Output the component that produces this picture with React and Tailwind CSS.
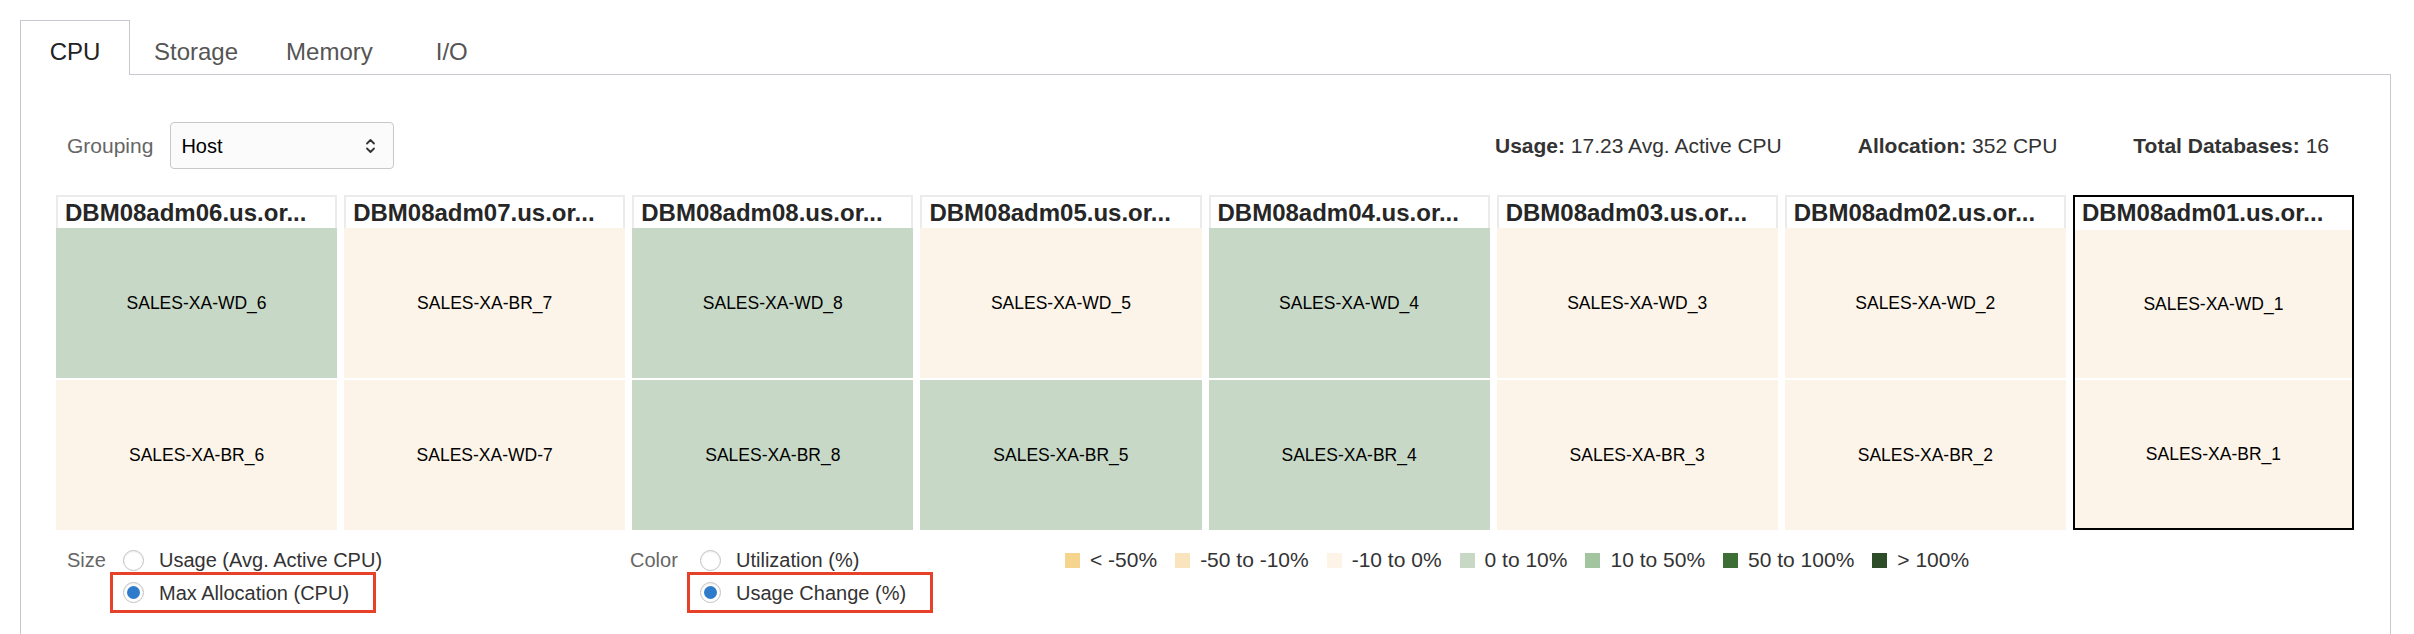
import React from 'react';

const TABS = ['CPU', 'Storage', 'Memory', 'I/O'];

const GREEN = 'bg-[#c7d9c6]';
const CREAM = 'bg-[#fcf4e8]';

const HOSTS = [
  { name: 'DBM08adm06.us.or...', cells: [{ db: 'SALES-XA-WD_6', c: GREEN }, { db: 'SALES-XA-BR_6', c: CREAM }] },
  { name: 'DBM08adm07.us.or...', cells: [{ db: 'SALES-XA-BR_7', c: CREAM }, { db: 'SALES-XA-WD-7', c: CREAM }] },
  { name: 'DBM08adm08.us.or...', cells: [{ db: 'SALES-XA-WD_8', c: GREEN }, { db: 'SALES-XA-BR_8', c: GREEN }] },
  { name: 'DBM08adm05.us.or...', cells: [{ db: 'SALES-XA-WD_5', c: CREAM }, { db: 'SALES-XA-BR_5', c: GREEN }] },
  { name: 'DBM08adm04.us.or...', cells: [{ db: 'SALES-XA-WD_4', c: GREEN }, { db: 'SALES-XA-BR_4', c: GREEN }] },
  { name: 'DBM08adm03.us.or...', cells: [{ db: 'SALES-XA-WD_3', c: CREAM }, { db: 'SALES-XA-BR_3', c: CREAM }] },
  { name: 'DBM08adm02.us.or...', cells: [{ db: 'SALES-XA-WD_2', c: CREAM }, { db: 'SALES-XA-BR_2', c: CREAM }] },
  { name: 'DBM08adm01.us.or...', selected: true, cells: [{ db: 'SALES-XA-WD_1', c: CREAM }, { db: 'SALES-XA-BR_1', c: CREAM }] },
];

const LEGEND = [
  { label: '< -50%', c: 'bg-[#f5d58d]' },
  { label: '-50 to -10%', c: 'bg-[#f9e4bd]' },
  { label: '-10 to 0%', c: 'bg-[#fdf4e7]' },
  { label: '0 to 10%', c: 'bg-[#c7d8c5]' },
  { label: '10 to 50%', c: 'bg-[#a2c49f]' },
  { label: '50 to 100%', c: 'bg-[#3d6e35]' },
  { label: '> 100%', c: 'bg-[#2d4d28]' },
];

const Radio = ({ checked }) => (
  <span className="w-[21px] h-[21px] shrink-0 rounded-full border border-[#c2c2c2] bg-white flex items-center justify-center shadow-[inset_0_1px_2px_rgba(0,0,0,0.08)]">
    {checked && <span className="w-[13px] h-[13px] rounded-full bg-[#2f7bcb]" />}
  </span>
);

const RadioGroup = ({ title, titleWidth, options }) => (
  <div className="flex">
    <div className={`${titleWidth} h-[24px] leading-[24px] text-[20px] text-[#666]`}>{title}</div>
    <div className="flex flex-col items-start">
      <div className="h-[24px] flex items-center pl-[13px]">
        <Radio />
        <span className="ml-[15px] text-[20px] text-[#333] whitespace-nowrap">{options[0]}</span>
      </div>
      <div className="h-[41px] flex items-center border-[3px] border-[#e8412a] pl-[10px] pr-[24px]">
        <Radio checked />
        <span className="ml-[15px] text-[20px] text-[#333] whitespace-nowrap">{options[1]}</span>
      </div>
    </div>
  </div>
);

export default function App() {
  return (
    <div className="w-[2414px] h-[634px] overflow-hidden bg-white font-['Liberation_Sans',Arial,sans-serif] text-[#333] pt-[20px] pl-[20px] pr-[23px] flex flex-col">
      {/* tabs */}
      <div className="flex h-[55px] shrink-0">
        {TABS.map((t, i) => (
          <div
            key={t}
            className={
              i === 0
                ? 'min-w-[110px] px-[24px] border border-b-0 border-[#c6cad0] bg-white pt-[17px] text-center text-[24px] leading-[28px] text-[#222]'
                : 'min-w-[110px] px-[24px] border-b border-[#c6cad0] pt-[18px] text-center text-[24px] leading-[28px] text-[#555]'
            }
          >
            {t}
          </div>
        ))}
        <div className="flex-1 border-b border-[#c6cad0]" />
      </div>

      {/* panel */}
      <div className="flex-1 border-l border-r border-[#c6cad0] pt-[47px] pl-[35px] pr-[36px]">
        <div className="flex items-center justify-between h-[47px] pl-[11px] pr-[25px]">
          <div className="flex items-center gap-[17px]">
            <span className="text-[21px] text-[#666]">Grouping</span>
            <div className="w-[224px] h-[47px] border border-[#c8c8c8] rounded-[4px] bg-[#fbfbfb] flex items-center justify-between pl-[10px] pr-[17px]">
              <span className="text-[20px] text-black">Host</span>
              <svg width="11" height="20" viewBox="0 0 11 20" fill="none" stroke="#333" strokeWidth="1.8" strokeLinecap="round" strokeLinejoin="round">
                <path d="M2 7.5 L5.5 4 L9 7.5" />
                <path d="M2 12.5 L5.5 16 L9 12.5" />
              </svg>
            </div>
          </div>
          <div className="flex items-center gap-[76px] text-[21px] text-[#333]">
            <span><b>Usage:</b> 17.23 Avg. Active CPU</span>
            <span><b>Allocation:</b> 352 CPU</span>
            <span><b>Total Databases:</b> 16</span>
          </div>
        </div>

        {/* treemap */}
        <div className="mt-[26px] grid grid-cols-8 gap-[7px] h-[335px]">
          {HOSTS.map(h => (
            <div key={h.name} className={`flex flex-col min-w-0 ${h.selected ? 'border-2 border-black' : ''}`}>
              <div
                className={`h-[33px] shrink-0 px-[7px] text-[24px] font-bold leading-[32px] text-[#262626] whitespace-nowrap overflow-hidden ${
                  h.selected ? '' : 'border-2 border-b-0 border-[#ebebeb]'
                }`}
              >
                {h.name}
              </div>
              <div className="flex-1 flex flex-col gap-[2px]">
                {h.cells.map(c => (
                  <div key={c.db} className={`flex-1 flex items-center justify-center text-[17.5px] text-black ${c.c}`}>
                    {c.db}
                  </div>
                ))}
              </div>
            </div>
          ))}
        </div>

        {/* size / color / legend */}
        <div className="mt-[18px] flex pl-[11px]">
          <div className="w-[563px]">
            <RadioGroup title="Size" titleWidth="w-[43px]" options={['Usage (Avg. Active CPU)', 'Max Allocation (CPU)']} />
          </div>
          <div className="w-[435px]">
            <RadioGroup title="Color" titleWidth="w-[57px]" options={['Utilization (%)', 'Usage Change (%)']} />
          </div>
          <div className="flex items-center h-[24px] gap-[18px]">
            {LEGEND.map(l => (
              <div key={l.label} className="flex items-center gap-[10px]">
                <span className={`w-[15px] h-[15px] ${l.c}`} />
                <span className="text-[21px] text-[#333] whitespace-nowrap">{l.label}</span>
              </div>
            ))}
          </div>
        </div>
      </div>
    </div>
  );
}
